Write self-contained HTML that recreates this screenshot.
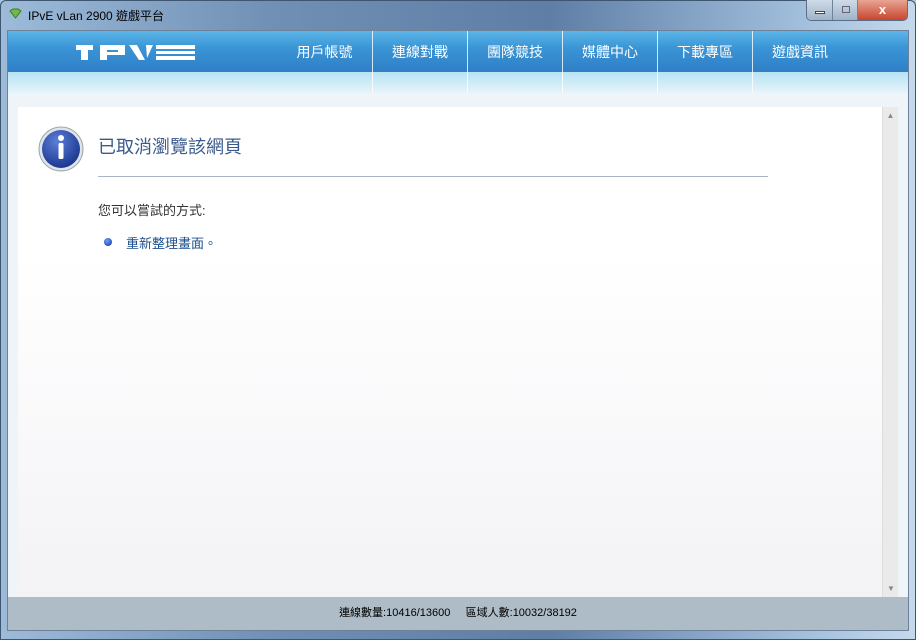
<!DOCTYPE html>
<html><head><meta charset="utf-8"><style>
*{margin:0;padding:0;box-sizing:border-box}
body{width:916px;height:640px;overflow:hidden;background:#a9c6e0;font-family:"Liberation Sans","Noto Sans CJK TC",sans-serif;position:relative}
.frame{position:absolute;left:0;top:0;width:916px;height:640px;background:linear-gradient(90deg,#9dbbd9 0%,#6f8fb4 30%,#5f7ea6 60%,#a7c4e0 90%,#c6d9ec 100%);border:1px solid #3f5670;border-radius:6px 6px 0 0}
.title{position:absolute;left:28px;top:7px;font-size:12px;color:#000}
.ico{position:absolute;left:9px;top:8px;width:13px;height:11px}
.btns{position:absolute;left:806px;top:0;width:102px;height:21px;border:1px solid #5a6f86;border-top:none;border-radius:0 0 5px 5px;overflow:hidden;display:flex}
.btns div{height:20px;background:linear-gradient(#cfdbe8,#9fb3c9);border-right:1px solid #6e829a;width:26px;position:relative}
.btns .x{width:50px;background:linear-gradient(#e8a493,#c7462d);color:#fff;font-weight:bold;font-size:13px;text-align:center;line-height:19px;border:none}
.client{position:absolute;left:7px;top:30px;width:902px;height:601px;background:#eef4f8;border:1px solid #6d8298}
.hdr{position:absolute;left:0;top:0;width:900px;height:41px;background:linear-gradient(#5cb6e8 0%,#3a95d6 40%,#2f7fc6 100%)}
.hdr2{position:absolute;left:0;top:41px;width:900px;height:21px;background:linear-gradient(#b7e3f4,#e6f4fa)}
.nav{position:absolute;top:0;height:62px;width:95px;color:#fff;font-size:14px;text-align:center;line-height:42px;border-left:1px solid rgba(255,255,255,.8)}
.nav.f{border-left:none}
.panel{position:absolute;left:10px;top:76px;width:864px;height:490px;background:linear-gradient(#fff 30%,#f3f3f6 100%)}
.scroll{position:absolute;left:874px;top:76px;width:16px;height:490px;background:#eaeaea;border-left:1px solid #ddd;color:#888;font-size:8px;text-align:center}
.status{position:absolute;left:0;top:566px;width:900px;height:33px;background:#adbcc6;font-size:11px;text-align:center;line-height:33px;color:#000}
</style></head><body>
<div class="frame"></div>
<svg class="ico" viewBox="0 0 13 11"><path d="M1 3 L6.5 10 L12 3 L9 1 H4Z" fill="#6fb84a" stroke="#3c7a2a"/></svg>
<div class="title">IPvE vLan 2900 遊戲平台</div>
<div class="btns"><div><span style="position:absolute;left:8px;top:11px;width:10px;height:3px;background:#fff;border:1px solid #445"></span></div><div><span style="position:absolute;left:9px;top:6px;width:8px;height:7px;border:1px solid #667"></span></div><div class="x">x</div></div>
<div class="client">
 <div class="hdr"></div><div class="hdr2"></div>
 <svg style="position:absolute;left:68px;top:13px" width="122" height="18" viewBox="0 0 122 18" fill="#fff">
  <rect x="0" y="1" width="17" height="5"/><rect x="5" y="6" width="7" height="10"/>
  <rect x="24" y="1" width="25" height="5"/><rect x="24" y="6" width="7" height="10"/><rect x="42" y="6" width="7" height="3"/><rect x="31" y="8" width="18" height="3"/>
  <path d="M53 1 H61 L69 16 H63Z"/><path d="M70 1 H77 L71 14Z"/>
  <rect x="80" y="1" width="39" height="4"/><rect x="80" y="7" width="39" height="3"/><rect x="80" y="12" width="39" height="4"/>
 </svg>
 <div class="nav f" style="left:269px">用戶帳號</div>
 <div class="nav" style="left:364px">連線對戰</div>
 <div class="nav" style="left:459px">團隊競技</div>
 <div class="nav" style="left:554px">媒體中心</div>
 <div class="nav" style="left:649px">下載專區</div>
 <div class="nav" style="left:744px">遊戲資訊</div>
 <div class="panel">
  <svg style="position:absolute;left:20px;top:19px" width="46" height="46" viewBox="0 0 46 46"><defs><radialGradient id="g" cx=".4" cy=".3" r=".8"><stop offset="0" stop-color="#5b7fd8"/><stop offset="1" stop-color="#132d86"/></radialGradient></defs><circle cx="23" cy="23" r="22" fill="#dfe3ea" stroke="#9aa"/><circle cx="23" cy="23" r="19" fill="url(#g)"/><circle cx="23" cy="12" r="3" fill="#fff"/><rect x="20.5" y="17" width="5" height="16" rx="1.5" fill="#fff"/></svg>
  <div style="position:absolute;left:80px;top:26px;font-size:18px;color:#3a5a8c">已取消瀏覽該網頁</div>
  <div style="position:absolute;left:80px;top:69px;width:670px;height:1px;background:#aab4c4"></div>
  <div style="position:absolute;left:80px;top:93px;font-size:13px;color:#333">您可以嘗試的方式:</div>
  <div style="position:absolute;left:86px;top:131px;width:8px;height:8px;border-radius:50%;background:radial-gradient(circle at 40% 35%,#6fa0ff,#0c2f9a)"></div>
  <div style="position:absolute;left:108px;top:126px;font-size:13px;color:#1b4f8c">重新整理畫面。</div>
 </div>
 <div class="scroll"><div style="margin-top:4px">▲</div><div style="position:absolute;bottom:4px;width:16px">▼</div></div>
 <div class="status">連線數量:10416/13600&nbsp;&nbsp;&nbsp;&nbsp; 區域人數:10032/38192</div>
</div>
</body></html>
